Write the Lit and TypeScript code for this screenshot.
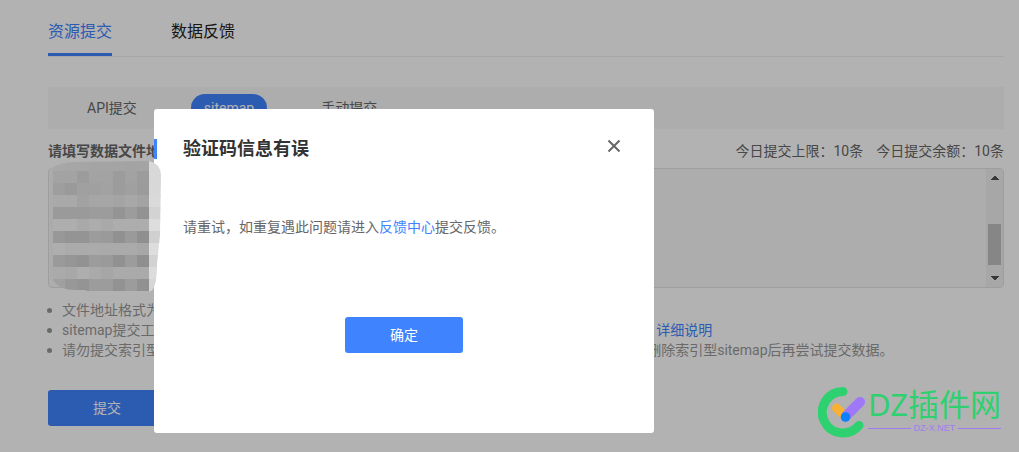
import { LitElement, html, css, svg } from "lit";
import { customElement } from "lit/decorators.js";

// Grey level of every mosaic cell, row by row
const MOSAIC = [
  [168, 166, 166, 164, 164, 164, 163, 164],
  [163, 163, 156, 163, 163, 156, 162, 156],
  [158, 154, 160, 160, 162, 156, 160, 155],
  [169, 169, 162, 166, 166, 164, 168, 163],
  [154, 154, 154, 156, 156, 148, 156, 146],
  [174, 174, 169, 173, 169, 173, 173, 173],
  [152, 148, 148, 156, 154, 145, 154, 143],
  [174, 171, 171, 171, 170, 170, 170, 167],
  [154, 150, 146, 156, 154, 145, 156, 143],
  [170, 168, 174, 170, 166, 170, 170, 170],
  [160, 152, 148, 156, 156, 146, 156, 145],
];
const EDGE = [216, 216, 216, 218, 211, 221, 208, 221, 210, 220, 214];
const CELL = 12;

@customElement("site-watermark")
class SiteWatermark extends LitElement {
  static styles = css`
    :host {
      display: flex;
      align-items: flex-start;
      gap: 2px;
    }
    .mark { display: block; }
    .words { display: flex; flex-direction: column; }
    .name {
      font-family: "Noto Sans", "Noto Sans CJK SC", sans-serif;
      font-size: 31px;
      line-height: 36px;
      color: #2ed16f;
      white-space: nowrap;
    }
    .domain {
      display: flex;
      align-items: center;
      gap: 3px;
      font-family: "Liberation Sans", sans-serif;
      font-size: 9px;
      line-height: 12px;
      color: #a07cf0;
    }
    .rule { flex: 1; height: 1px; background: #a07cf0; }
  `;
  render() {
    return html`
      <svg class="mark" width="48" height="52" viewBox="0 0 48 52" fill="none" stroke-linecap="round">
        <path d="M25 5.6 A20.7 20.7 0 1 0 41 39.4" stroke="#2ed16f" stroke-width="9" />
        <path d="M18.5 22 L27 30" stroke="#f8b133" stroke-width="9" />
        <path d="M42 16 L29 29" stroke="#9f78f8" stroke-width="10" />
        <circle cx="27.5" cy="31" r="4.8" fill="#0f80fb" />
      </svg>
      <div class="words">
        <div class="name">DZ插件网</div>
        <div class="domain"><span class="rule"></span>DZ-X.NET<span class="rule"></span></div>
      </div>
    `;
  }
}

@customElement("app-root")
class AppRoot extends LitElement {
  static styles = css`
    :host {
      display: block;
      position: relative;
      min-height: 100vh;
      box-sizing: border-box;
      overflow: hidden;
      background: #fff;
      color: #666;
      font-family: Roboto, "Noto Sans CJK SC", sans-serif;
      font-size: 14px;
      line-height: 20px;
    }
    a { color: #4083ff; text-decoration: none; }
    button { font: inherit; border: 0; padding: 0; margin: 0; cursor: pointer; }
    .page { padding: 0 15px 26px 48px; }
    .tabs {
      display: flex;
      gap: 59px;
      border-bottom: 1px solid #eee;
      font-size: 16px;
      line-height: 24px;
    }
    .tab { background: none; color: #222; padding: 20px 0 12px; }
    .tab.active { color: #4083ff; box-shadow: inset 0 -3px #4083ff; }
    .modes {
      display: flex;
      align-items: center;
      gap: 40px;
      margin-top: 30px;
      padding: 7px 25px;
      background: #f8f8f8;
    }
    .mode {
      background: none;
      color: #666;
      line-height: 28px;
      border-radius: 14px;
      padding: 0 14px;
    }
    .mode.active { background: #4083ff; color: #fff; padding: 0 13px; }
    .head { display: flex; gap: 13px; margin-top: 12px; }
    .label { flex: 1; font-weight: 700; }
    .box {
      display: flex;
      margin-top: 7px;
      height: 118px;
      border: 1px solid #e3e3e3;
      border-radius: 4px;
      background: #f8f8f8;
      overflow: hidden;
    }
    .urls { flex: 1; border: 0; padding: 8px; background: none; resize: none; outline: 0; overflow: hidden; }
    .scroll { display: block; background: #f0f0f0; }
    .notes { margin: 12px 0 0; padding: 0 0 0 14px; color: #999; white-space: nowrap; }
    .notes li { list-style: none; display: flex; align-items: center; }
    .notes li::before {
      content: "";
      width: 5px;
      height: 5px;
      border-radius: 50%;
      background: #999;
      margin: 0 10px 0 -15px;
    }
    .notes span { white-space: pre; }
    .submit {
      display: block;
      margin-top: 30px;
      width: 118px;
      line-height: 36px;
      border-radius: 3px;
      background: #4083ff;
      color: #fff;
    }
    .shade { position: absolute; inset: 0; background: rgba(0, 0, 0, 0.3); }
    .modal {
      position: absolute;
      left: 154px;
      top: 109px;
      width: 500px;
      box-sizing: border-box;
      padding-bottom: 80px;
      border-radius: 3px;
      background: #fff;
    }
    .modal-head {
      display: flex;
      align-items: flex-start;
      justify-content: space-between;
      padding: 30px 33px 0 0;
    }
    .title {
      margin: 0;
      padding-left: 26px;
      border-left: 3px solid #4083ff;
      font-size: 18px;
      line-height: 20px;
      color: #333;
    }
    .close { display: block; background: none; }
    .close svg { display: block; }
    .message { margin: 58px 29px 80px; }
    .ok {
      display: block;
      margin: 0 auto;
      width: 118px;
      line-height: 36px;
      border-radius: 3px;
      background: #4083ff;
      color: #fff;
    }
    .mosaic { position: absolute; left: 41px; top: 159px; }
    .brand { position: absolute; right: 18px; bottom: 14px; }
  `;

  private mosaic() {
    return svg`
      <defs>
        <clipPath id="smear">
          <path d="M9 10 Q16 4 34 3 L108 2 Q119 4 120 16 L119 76 L116 105 Q116 128 110 132 L106 133 L106 132 L46 132 L44 131 L32 131 Q16 130 11 119 L9 116 Z" />
        </clipPath>
      </defs>
      <g clip-path="url(#smear)" shape-rendering="crispEdges">
        <rect x="8" y="0" width="4" height="136" fill="#ababab" />
        ${MOSAIC.map((row, y) =>
          row.map((v, x) => svg`<rect x=${12 + x * CELL} y=${y * CELL} width=${CELL} height=${CELL} fill="rgb(${v},${v},${v})" />`)
        )}
        ${EDGE.map((v, y) => svg`<rect x="108" y=${y * CELL} width="14" height=${CELL + 2} fill="rgb(${v},${v},${v})" />`)}
      </g>
    `;
  }

  render() {
    return html`
      <main class="page">
        <nav class="tabs">
          <button class="tab active">资源提交</button>
          <button class="tab">数据反馈</button>
        </nav>
        <div class="modes">
          <button class="mode">API提交</button>
          <button class="mode active">sitemap</button>
          <button class="mode">手动提交</button>
        </div>
        <div class="head">
          <label class="label" for="urls">请填写数据文件地址</label>
          <span>今日提交上限：10条</span>
          <span>今日提交余额：10条</span>
        </div>
        <div class="box">
          <textarea class="urls" id="urls"></textarea>
          <svg class="scroll" width="17" height="118" viewBox="0 0 17 118" shape-rendering="crispEdges">
            <path d="M4 11 L8.500 6.500 L13 11 Z M4 107 L13 107 L8.500 111.500 Z" fill="#505050" />
            <rect x="2" y="55" width="13" height="41" fill="#c1c1c1" />
          </svg>
        </div>
        <ul class="notes">
          <li><span>文件地址格式为完整链接，每行填写一个</span></li>
          <li><span>sitemap提交工具会定期抓取检查您提交的sitemap文件，并处理其中的链接，请保持地址有效。 <a href="#">详细说明</a></span></li>
          <li><span>请勿提交索引型sitemap，平台暂不支持索引型sitemap，若此前已提交过sitemap，请在列表中删除索引型sitemap后再尝试提交数据。</span></li>
        </ul>
        <button class="submit">提交</button>
      </main>
      <div class="shade"></div>
      <section class="modal" role="dialog" aria-labelledby="title">
        <header class="modal-head">
          <h2 class="title" id="title">验证码信息有误</h2>
          <button class="close" aria-label="关闭">
            <svg width="14" height="14" viewBox="0 0 14 14" stroke="#666" stroke-width="2">
              <path d="M1.500 1.500 L12.500 12.500 M12.500 1.500 L1.500 12.500" />
            </svg>
          </button>
        </header>
        <p class="message">请重试，如重复遇此问题请进入<a href="#">反馈中心</a>提交反馈。</p>
        <button class="ok">确定</button>
      </section>
      <svg class="mosaic" width="122" height="136" viewBox="0 0 122 136">${this.mosaic()}</svg>
      <site-watermark class="brand"></site-watermark>
    `;
  }
}
